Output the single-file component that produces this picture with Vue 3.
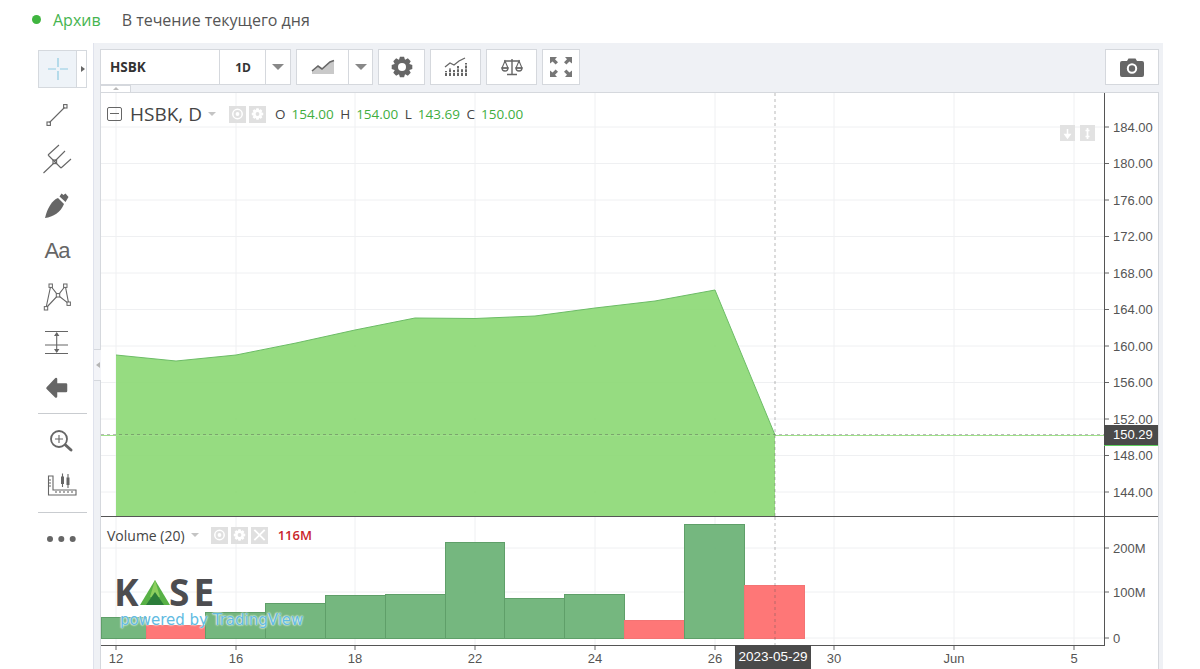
<script setup>
const gridX = [116, 236, 355, 475, 595, 715, 834, 954, 1074]
const timeLabels = [
  { x: 116, t: '12' }, { x: 236, t: '16' }, { x: 355, t: '18' }, { x: 475, t: '22' },
  { x: 595, t: '24' }, { x: 715, t: '26' }, { x: 834, t: '30' }, { x: 954, t: 'Jun' }, { x: 1074, t: '5' }
]
const prices = [184, 180, 176, 172, 168, 164, 160, 156, 152, 148, 144].map((p, i) => ({
  y: 127 + i * 36.5,
  t: p.toFixed(2)
}))
const volumes = [{ y: 548, t: '200M' }, { y: 592, t: '100M' }, { y: 638, t: '0' }]
const area = [
  [116, 355], [176, 361], [236, 355], [296, 343], [355, 330], [415, 318],
  [475, 318.5], [535, 316], [595, 308], [655, 301], [715, 290], [775, 435]
]
const areaLine = area.map((p) => p.join(',')).join(' ')
const areaFill = `116,516 ${areaLine} 775,516`
const bars = [
  { x: 101, w: 45, y: 617, up: true }, { x: 146, w: 59, y: 625, up: false },
  { x: 205, w: 60, y: 612, up: true }, { x: 265, w: 60, y: 603, up: true },
  { x: 325, w: 60, y: 595, up: true }, { x: 385, w: 60, y: 594, up: true },
  { x: 445, w: 59, y: 542, up: true }, { x: 504, w: 60, y: 598, up: true },
  { x: 564, w: 60, y: 594, up: true }, { x: 624, w: 60, y: 620, up: false },
  { x: 684, w: 60, y: 524, up: true }, { x: 744, w: 60, y: 585, up: false }
]
const ohlc = [
  { k: 'O', v: '154.00' }, { k: 'H', v: '154.00' }, { k: 'L', v: '143.69' }, { k: 'C', v: '150.00' }
]
function gear(r1, r2, n) {
  const pts = []
  for (let i = 0; i < n; i++) {
    const a = (i / n) * Math.PI * 2
    const s = Math.PI / n
    const at = (rad, ang) => `${(rad * Math.cos(ang)).toFixed(2)} ${(rad * Math.sin(ang)).toFixed(2)}`
    pts.push(at(r1, a - s * 0.95), at(r2, a - s * 0.5), at(r2, a + s * 0.5), at(r1, a + s * 0.95))
  }
  return 'M' + pts.join('L') + 'Z'
}
const gearBig = gear(8, 10.5, 8)
const gearSmall = gear(4.6, 6.2, 8)
</script>

<template>
  <div class="page">
    <nav class="tabs">
      <span class="dot"></span>
      <span class="tab active">Архив</span>
      <span class="tab">В течение текущего дня</span>
    </nav>

    <div class="terminal">
      <aside class="drawing">
        <div class="cursor-btn">
          <span class="cursor-main">
            <svg width="22" height="24" viewBox="0 0 22 24" class="cursor-icon">
              <path d="M1 12H9M13 12H21M11 1V10M11 14V23" />
            </svg>
          </span>
          <span class="cursor-more"></span>
        </div>

        <div class="tool">
          <svg class="ico" width="28" height="28" viewBox="0 0 28 28">
            <path d="M6.5 21.5L21.5 6.5" class="st" />
            <rect x="4" y="21" width="3.4" height="3.4" class="st" />
            <rect x="20.6" y="3.6" width="3.4" height="3.4" class="st" />
          </svg>
        </div>
        <div class="tool">
          <svg class="ico" width="28" height="28" viewBox="0 0 28 28">
            <path d="M0.5 27L11 17M5 9L18 22M5 9L16 -1M11 16L22 5M18 22L28 13" class="st" />
            <rect x="10" y="14" width="3.6" height="3.6" class="st" />
          </svg>
        </div>
        <div class="tool">
          <svg class="ico" width="28" height="28" viewBox="0 0 28 28">
            <path d="M2 26C4 17 9 8 15 6L21 12C18 20 10 25 2 26Z" class="fl" />
            <path d="M16.5 4.5L18.5 1.5L20.5 3L22.5 1.5L25.5 5L22.5 10Z" class="fl" />
          </svg>
        </div>
        <div class="tool tool-text">Aa</div>
        <div class="tool">
          <svg class="ico" width="28" height="28" viewBox="0 0 28 28">
            <path d="M3 25L7.7 3L15 12.3L22.3 3L25.7 20.7L15 12.3L3 25" class="st" />
            <rect x="6" y="1" width="3.4" height="3.4" class="sq" />
            <rect x="20.6" y="1" width="3.4" height="3.4" class="sq" />
            <rect x="13.3" y="10.6" width="3.4" height="3.4" class="sq" />
            <rect x="24" y="19" width="3.4" height="3.4" class="sq" />
            <rect x="1.3" y="23.6" width="3.4" height="3.4" class="sq" />
          </svg>
        </div>
        <div class="tool">
          <svg class="ico" width="28" height="28" viewBox="0 0 28 28">
            <path d="M2 3.5H25M2 17H25M2 25.5H25M13.7 5V24" class="st" />
            <path d="M13.7 4L11 8H16.4ZM13.7 25L11 21H16.4Z" class="fl" />
          </svg>
        </div>
        <div class="tool">
          <svg class="ico" width="28" height="28" viewBox="0 0 28 28">
            <path d="M4.5 14L13 5V10.5H23V17H13V22.5Z" class="fl round" />
          </svg>
        </div>

        <div class="sep first"></div>

        <div class="tool">
          <svg class="ico" width="28" height="28" viewBox="0 0 28 28">
            <circle cx="16" cy="13" r="8" class="st thick" />
            <path d="M16 9V17M12 13H20" class="st" />
            <path d="M22.5 19L28 24" class="st handle" />
          </svg>
        </div>
        <div class="tool">
          <svg class="ico" width="28" height="28" viewBox="0 0 28 28">
            <path d="M5.5 4H10V18H33V23H5.5Z" class="st" />
            <path d="M6 8H8M6 11H8M6 14H8M13 19V21M17 19V21M21 19V21M25 19V21M29 19V21" class="st" />
            <path d="M19.5 1.5V15M25 2V16" class="st" />
            <rect x="18" y="4.5" width="3" height="7.5" class="fl" />
            <rect x="23.5" y="5.5" width="3" height="7.5" class="fl" />
          </svg>
        </div>

        <div class="sep second"></div>

        <div class="tool">
          <svg class="ico" width="28" height="28" viewBox="0 0 28 28">
            <circle cx="7" cy="14" r="3" class="fl" />
            <circle cx="18.3" cy="14" r="3" class="fl" />
            <circle cx="29.7" cy="14" r="3" class="fl" />
          </svg>
        </div>
      </aside>

      <section class="widget">
        <header class="topbar">
          <div class="group">
            <span class="cell symbol">HSBK</span>
            <span class="cell interval">1D</span>
            <span class="cell caret-cell"><i class="caret"></i></span>
          </div>
          <div class="group">
            <span class="cell style-cell">
              <svg width="24" height="16" viewBox="0 0 24 16">
                <path d="M1 15V12L7 7L11 10L19 3L23 2V15Z" fill="#c9c9c9" />
                <path d="M1 12L7 7L11 10L19 3L23 1.5" fill="none" stroke="#666" stroke-width="1.6" />
              </svg>
            </span>
            <span class="cell caret-cell narrow"><i class="caret"></i></span>
          </div>
          <div class="group"><span class="cell gear-cell">
            <svg width="24" height="24" viewBox="-12 -12 24 24">
              <path :d="gearBig" fill="#666" />
              <circle r="4" fill="#fff" />
            </svg>
          </span></div>
          <div class="group"><span class="cell ind-cell">
            <svg width="24" height="20" viewBox="0 0 24 20">
              <path d="M2 19V14M6 19V11M10 19V13M14 19V9M18 19V12M22 19V6" stroke="#666" stroke-width="2" stroke-dasharray="3 0.8" fill="none" />
              <path d="M1 10L6 6L10 8L15 4L21 1" stroke="#666" stroke-width="1.3" fill="none" />
            </svg>
          </span></div>
          <div class="group"><span class="cell ind-cell">
            <svg width="22" height="18" viewBox="0 0 22 18">
              <path d="M11 1V16M6 16.5H16M3 3H19" stroke="#666" stroke-width="1.4" fill="none" />
              <path d="M4 3L1 10H7ZM18 3L15 10H21Z" stroke="#666" stroke-width="1.1" fill="none" />
              <path d="M1 10A3 3 0 0 0 7 10ZM15 10A3 3 0 0 0 21 10Z" fill="none" stroke="#666" stroke-width="1.3" />
            </svg>
          </span></div>
          <div class="group"><span class="cell full-cell">
            <svg width="24" height="22" viewBox="0 0 24 22">
              <path d="M1 1H8L6 3.2L9 6.2L6.6 8.4L3.6 5.4L1 7.6ZM23 1H16L18 3.2L15 6.2L17.4 8.4L20.4 5.4L23 7.6ZM1 21H8L6 18.8L9 15.8L6.6 13.6L3.6 16.6L1 14.4ZM23 21H16L18 18.8L15 15.8L17.4 13.6L20.4 16.6L23 14.4Z" fill="#777" />
            </svg>
          </span></div>
          <div class="group camera"><span class="cell camera-cell">
            <svg width="24" height="19" viewBox="0 0 24 19">
              <path d="M2 3H7L8.5 0.5H15.5L17 3H22A2 2 0 0 1 24 5V17A2 2 0 0 1 22 19H2A2 2 0 0 1 0 17V5A2 2 0 0 1 2 3Z" fill="#666" />
              <circle cx="12" cy="10.5" r="4.2" fill="none" stroke="#fff" stroke-width="2" />
            </svg>
          </span></div>
          <span class="collapse-top"><i></i></span>
        </header>

        <div class="chart">
          <span class="collapse-left"><i></i></span>

          <div class="cell-main">
            <svg class="plot" width="1003" height="423" viewBox="101 93 1003 423">
              <line v-for="x in gridX" :key="x" :x1="x" :x2="x" y1="93" y2="516" class="grid" />
              <line v-for="p in prices" :key="p.t" x1="101" x2="1104" :y1="p.y" :y2="p.y" class="grid" />
              <polygon :points="areaFill" class="area" />
              <polyline :points="areaLine" class="area-line" />
              <line x1="101" x2="1104" y1="435.5" y2="435.5" class="last-line" />
              <line x1="101" x2="1104" y1="434.5" y2="434.5" class="cross" />
              <line x1="775" x2="775" y1="93" y2="516" class="cross" />
            </svg>

            <div class="legend">
              <span class="minus"></span>
              <span class="title">HSBK, D</span>
              <i class="caret light"></i>
              <span class="mini first-mini">
                <svg width="18" height="18" viewBox="0 0 18 18">
                  <circle cx="9" cy="9" r="5" fill="none" stroke="#fff" stroke-width="1.6" />
                  <circle cx="9" cy="9" r="2" fill="#fff" />
                </svg>
              </span>
              <span class="mini">
                <svg width="18" height="18" viewBox="-9 -9 18 18"><path :d="gearSmall" fill="#fff" /><circle r="2" fill="#e0e0e0" /></svg>
              </span>
              <span class="ohlc">
                <span v-for="o in ohlc" :key="o.k" class="pair"><b>{{ o.k }}</b><em>{{ o.v }}</em></span>
              </span>
            </div>

            <div class="scroll-btns">
              <span class="mini-sm">
                <svg width="15" height="15" viewBox="0 0 15 15"><path d="M7.5 3V9M5 8.5L7.5 12L10 8.5Z" stroke="#fff" stroke-width="1.5" fill="#fff" /></svg>
              </span>
              <span class="mini-sm">
                <svg width="15" height="15" viewBox="0 0 15 15"><path d="M7.5 2V13M5.5 4.5H9.5M5.5 10.5H9.5" stroke="#fff" stroke-width="1.7" fill="none" /></svg>
              </span>
            </div>
          </div>

          <div class="cell-price">
            <svg class="plot" width="53" height="423" viewBox="1105 93 53 423">
              <g v-for="p in prices" :key="p.t">
                <line x1="1105" x2="1109" :y1="p.y" :y2="p.y" class="tick" />
                <text x="1113" :y="p.y + 4.5" class="axis-text">{{ p.t }}</text>
              </g>
            </svg>
            <span class="price-tag">150.29</span>
          </div>

          <div class="cell-volume">
            <svg class="plot" width="1003" height="128" viewBox="101 517 1003 128">
              <line v-for="x in gridX" :key="x" :x1="x" :x2="x" y1="517" y2="645" class="grid" />
              <line v-for="v in volumes" :key="v.t" x1="101" x2="1104" :y1="v.y" :y2="v.y" class="grid" />
              <rect
                v-for="b in bars"
                :key="b.x"
                :x="b.x + 0.5"
                :y="b.y + 0.5"
                :width="b.w"
                :height="638 - b.y"
                :class="b.up ? 'bar-up' : 'bar-down'"
              />
              <line x1="775" x2="775" y1="517" y2="645" class="cross" />
            </svg>

            <div class="legend volume-legend">
              <span class="vol-title">Volume (20)</span>
              <i class="caret light"></i>
              <span class="mini vol-first">
                <svg width="18" height="18" viewBox="0 0 18 18">
                  <circle cx="9" cy="9" r="5" fill="none" stroke="#fff" stroke-width="1.6" />
                  <circle cx="9" cy="9" r="2" fill="#fff" />
                </svg>
              </span>
              <span class="mini">
                <svg width="18" height="18" viewBox="-9 -9 18 18"><path :d="gearSmall" fill="#fff" /><circle r="2" fill="#e0e0e0" /></svg>
              </span>
              <span class="mini">
                <svg width="18" height="18" viewBox="0 0 18 18"><path d="M3.5 3.5L14.5 14.5M14.5 3.5L3.5 14.5" stroke="#fff" stroke-width="2" /></svg>
              </span>
              <span class="vol-value">116M</span>
            </div>

            <div class="brand">
              <div class="kase">
                <span class="kase-k">K</span>
                <svg width="30" height="26" viewBox="0 0 30 26">
                  <polygon points="15,0 30,25 0,25" fill="#58b146" />
                  <polygon points="15,0 20,17 10,17" fill="#8ccf5e" />
                  <polygon points="15,12 24,25 6,25" fill="#2c7d3a" />
                </svg>
                <span class="kase-se">SE</span>
              </div>
              <div class="powered">powered by TradingView</div>
            </div>
          </div>

          <div class="cell-volaxis">
            <svg class="plot" width="53" height="128" viewBox="1105 517 53 128">
              <g v-for="v in volumes" :key="v.t">
                <line x1="1105" x2="1109" :y1="v.y" :y2="v.y" class="tick" />
                <text x="1113" :y="v.y + 4.5" class="axis-text">{{ v.t }}</text>
              </g>
            </svg>
          </div>

          <div class="cell-time">
            <svg class="plot" width="1003" height="23" viewBox="101 646 1003 23">
              <g v-for="l in timeLabels" :key="l.t">
                <line :x1="l.x" :x2="l.x" y1="646" y2="650" class="tick" />
                <text :x="l.x" y="663" text-anchor="middle" class="axis-text">{{ l.t }}</text>
              </g>
            </svg>
            <span class="date-tag">2023-05-29</span>
          </div>
        </div>
      </section>
    </div>
  </div>
</template>

<style scoped>
.page {
  width: 1200px;
  height: 669px;
  overflow: hidden;
  background: #fff;
  font-family: "Open Sans", "Liberation Sans", sans-serif;
}
.tabs {
  height: 43px;
  display: flex;
  align-items: center;
  padding: 0 0 4px 32px;
  box-sizing: border-box;
  font-size: 16px;
  color: #555;
}
.dot {
  width: 9px;
  height: 9px;
  border-radius: 50%;
  background: #3fb53f;
  margin-right: 12px;
}
.tab { margin-right: 21px; }
.tab.active { color: #46b450; }

.terminal { display: flex; align-items: flex-start; }

.drawing {
  width: 93px;
  flex: none;
  padding: 7px 0 0 38px;
  box-sizing: border-box;
}
.cursor-btn {
  width: 49px;
  height: 38px;
  box-sizing: border-box;
  border: 1px solid #d5d9de;
  background: #eef3f8;
  display: flex;
  margin-bottom: 4px;
}
.cursor-main {
  width: 37px;
  display: flex;
  align-items: center;
  justify-content: center;
  border-right: 1px solid #d5d9de;
}
.cursor-icon path { stroke: #8fcbe2; stroke-width: 1.2; fill: none; }
.cursor-more {
  flex: 1;
  background: #fff;
  position: relative;
}
.cursor-more::after {
  content: "";
  position: absolute;
  left: 4px;
  top: 15px;
  border-left: 4px solid #666;
  border-top: 3.5px solid transparent;
  border-bottom: 3.5px solid transparent;
}
.tool {
  width: 38px;
  height: 45.5px;
  display: flex;
  align-items: center;
  justify-content: center;
}
.tool-text {
  font-family: "Liberation Sans", sans-serif;
  font-size: 22px;
  letter-spacing: -1px;
  color: #666;
}
.ico { overflow: visible; }
.st { fill: none; stroke: #666; stroke-width: 1.1; }
.sq { fill: #fff; stroke: #666; stroke-width: 1; }
.fl { fill: #666; }
.round { stroke: #666; stroke-width: 2.5; stroke-linejoin: round; }
.thick { stroke-width: 1.8; }
.handle { stroke-width: 3; stroke-linecap: round; }
.sep {
  width: 49px;
  height: 1px;
  background: #c9ccd0;
}
.sep.first { margin: 2px 0 4px; }
.sep.second { margin: 3px 0 4px; }

.widget {
  width: 1070px;
  flex: none;
  background: #eff1f5;
  border-left: 1px solid #dfe2ec;
  padding-left: 6px;
  box-sizing: border-box;
  height: 626px;
}
.topbar {
  height: 49px;
  box-sizing: border-box;
  display: flex;
  gap: 5px;
  padding-top: 6px;
  position: relative;
}
.group {
  height: 36px;
  display: flex;
  background: #fff;
  border: 1px solid #d5d8dd;
  box-sizing: border-box;
  color: #333;
}
.cell {
  display: flex;
  align-items: center;
  justify-content: center;
  height: 100%;
  box-sizing: border-box;
}
.symbol {
  width: 119px;
  justify-content: flex-start;
  padding-left: 9px;
  font-weight: 700;
  font-size: 13.5px;
  border-right: 1px solid #d5d8dd;
}
.interval {
  width: 46px;
  font-weight: 700;
  font-size: 12px;
  padding-left: 1px;
  border-right: 1px solid #d5d8dd;
}
.caret-cell { width: 24px; }
.caret-cell.narrow { width: 23px; }
.caret {
  display: inline-block;
  border-top: 6px solid #888;
  border-left: 6px solid transparent;
  border-right: 6px solid transparent;
}
.caret.light {
  border-top: 4px solid #c4c4c4;
  border-left: 4.5px solid transparent;
  border-right: 4.5px solid transparent;
}
.style-cell { width: 52px; border-right: 1px solid #d5d8dd; }
.gear-cell { width: 45px; }
.ind-cell { width: 49px; }
.full-cell { width: 36px; }
.camera { margin-left: auto; margin-right: 4px; }
.camera-cell { width: 52px; }
.collapse-top {
  position: absolute;
  left: 0;
  top: 42px;
  width: 31px;
  height: 7px;
  background: #fff;
  border: 1px solid #d5d8dd;
  border-bottom: none;
  box-sizing: border-box;
  display: flex;
  justify-content: center;
  padding-top: 1px;
}
.collapse-top i {
  border-bottom: 3px solid #bbb;
  border-left: 3px solid transparent;
  border-right: 3px solid transparent;
  height: 0;
}

.chart {
  width: 1059px;
  height: 577px;
  box-sizing: border-box;
  background: #fff;
  border: 1px solid #d5d8dd;
  border-bottom: none;
  display: grid;
  grid-template-columns: 1004px 53px;
  grid-template-rows: 424px 129px 23px;
  position: relative;
}
.collapse-left {
  position: absolute;
  left: -7px;
  top: 256px;
  width: 7px;
  height: 32px;
  background: #f3f4f8;
  border-top: 1px solid #d5d8dd;
  border-bottom: 1px solid #d5d8dd;
  box-sizing: border-box;
  display: flex;
  align-items: center;
  justify-content: center;
}
.collapse-left i {
  border-right: 4px solid #b5b5b5;
  border-top: 3.5px solid transparent;
  border-bottom: 3.5px solid transparent;
}
.plot { display: block; }
.cell-main,
.cell-volume,
.cell-time,
.cell-price,
.cell-volaxis { position: relative; box-sizing: border-box; }
.cell-main { border-right: 1px solid #555; border-bottom: 1px solid #555; }
.cell-price { border-bottom: 1px solid #555; }
.cell-volume { border-right: 1px solid #555; border-bottom: 1px solid #555; }

.grid { stroke: #eff0f2; stroke-width: 1; }
.tick { stroke: #666; stroke-width: 1; }
.area { fill: #8bd873; fill-opacity: 0.9; }
.area-line { fill: none; stroke: #6cbc66; stroke-width: 1; }
.last-line { stroke: #9fe08a; stroke-width: 1; }
.cross { stroke: rgba(80, 80, 80, 0.4); stroke-width: 1; stroke-dasharray: 3 3; }
.bar-up { fill: #69b174; fill-opacity: 0.92; stroke: #5f9f69; stroke-width: 1; }
.bar-down { fill: #fe7070; fill-opacity: 0.95; stroke: #f47474; stroke-width: 1; }
.axis-text {
  font-family: "Liberation Sans", sans-serif;
  font-size: 13px;
  fill: #555;
}

.legend {
  position: absolute;
  left: 6px;
  top: 9px;
  height: 24px;
  display: flex;
  align-items: center;
  color: #444;
}
.minus {
  width: 15px;
  height: 14px;
  box-sizing: border-box;
  border: 1px solid #666;
  border-radius: 2px;
  position: relative;
  margin-right: 8px;
}
.minus::after {
  content: "";
  position: absolute;
  left: 2px;
  right: 2px;
  top: 5px;
  height: 1px;
  background: #666;
}
.title { font-size: 19px; margin-right: 13px; width: 65px; white-space: nowrap; }
.mini {
  width: 17px;
  height: 17px;
  background: #e0e0e0;
  margin-left: 3px;
  display: flex;
  align-items: center;
  justify-content: center;
  flex: none;
}
.first-mini { margin-left: 13px; }
.ohlc { display: flex; gap: 6.5px; margin-left: 9px; font-size: 13.5px; }
.pair { display: flex; gap: 6px; }
.pair b { font-weight: 400; color: #444; }
.pair em { font-style: normal; color: #3fae3f; }

.scroll-btns {
  position: absolute;
  left: 959px;
  top: 32px;
  display: flex;
  gap: 5px;
}
.mini-sm {
  width: 15px;
  height: 16px;
  background: #e2e2e2;
  display: flex;
  align-items: center;
  justify-content: center;
}

.volume-legend { top: 6px; }
.vol-title { font-size: 14px; margin-right: 6px; white-space: nowrap; }
.vol-first { margin-left: 12px; }
.vol-value { font-size: 13px; font-weight: 600; color: #c9252b; margin-left: 10px; }

.brand {
  position: absolute;
  left: 13px;
  top: 58px;
}
.kase {
  display: flex;
  align-items: flex-end;
  height: 33px;
  font-family: "Open Sans", sans-serif;
  font-size: 37px;
  font-weight: 700;
  line-height: 33px;
  color: #4d4d50;
}
.kase-k { width: 23px; flex: none; }
.kase svg { margin: 0 0 2px 3px; flex: none; }
.kase-se { margin-left: -1px; letter-spacing: 4px; }
.powered {
  font-family: "DejaVu Sans", sans-serif;
  font-size: 15px;
  line-height: 18px;
  margin: 3px 0 0 6px;
  white-space: nowrap;
  color: #62bbe2;
  text-shadow: 0 0 2px #fff, 0 0 2px #fff;
}

.price-tag {
  position: absolute;
  left: -1px;
  right: 0;
  top: 332px;
  height: 21px;
  box-sizing: border-box;
  background: #4a4a4a;
  border-bottom: 1px solid #5fd05f;
  color: #fff;
  font-family: "Liberation Sans", sans-serif;
  font-size: 13px;
  line-height: 20px;
  padding-left: 9px;
}
.date-tag {
  position: absolute;
  left: 634px;
  top: -1px;
  width: 76px;
  height: 24px;
  background: #4a4a4a;
  color: #fff;
  font-family: "Liberation Sans", sans-serif;
  font-size: 13.5px;
  line-height: 24px;
  text-align: center;
}
</style>
